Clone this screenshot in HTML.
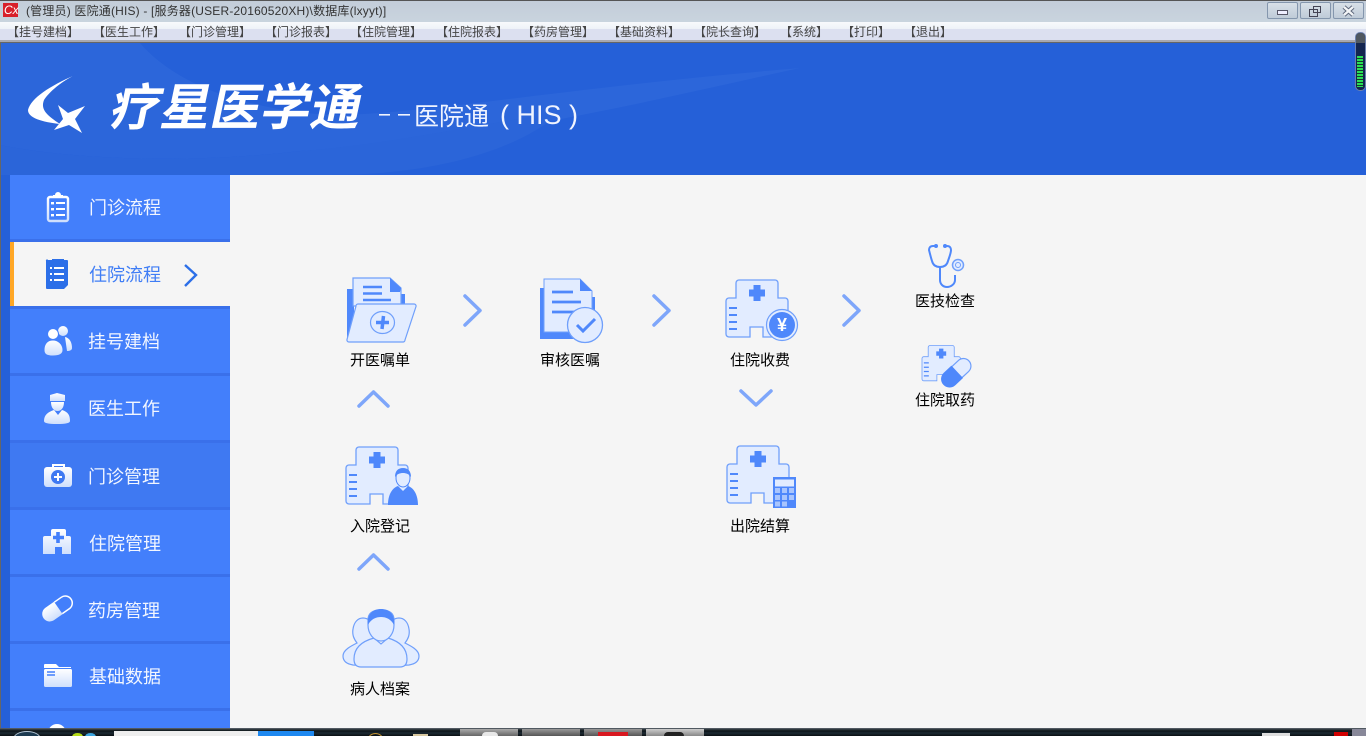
<!DOCTYPE html>
<html><head><meta charset="utf-8">
<style>
html,body{margin:0;padding:0;width:1366px;height:736px;overflow:hidden;background:#f5f5f5;font-family:"Liberation Sans","Noto Sans CJK SC",sans-serif}
#r{position:relative;width:1366px;height:736px;overflow:hidden;background:#f5f5f5}
.a{position:absolute}
svg{position:absolute;left:0;top:0;overflow:hidden}
.m{position:absolute;top:24px;font:12px/16px "Liberation Sans","WenQuanYi Zen Hei",sans-serif;color:#444;white-space:nowrap}
.s{position:absolute;left:10px;width:220px;height:64px;background:#437ffb}
.st{position:absolute;font:18px/24px "Liberation Sans","Noto Sans CJK SC",sans-serif;color:#f2f6ff;white-space:nowrap}
.l{position:absolute;font:15px/20px "Liberation Sans","WenQuanYi Zen Hei",sans-serif;color:#000;white-space:nowrap;width:80px;text-align:center}
.b{position:absolute;top:2px;width:29px;height:15px;border:1px solid #8496ad;border-radius:2px;background:linear-gradient(#d8e0e8,#bfcbd8)}
</style></head><body><div id="r">
<div class="a" style="left:0;top:0;width:1366px;height:22px;background:linear-gradient(#c3cdd9,#c9d4de);border-top:1px solid #555;box-sizing:border-box"></div>
<div class="a" style="left:3px;top:3px;width:15px;height:14px;background:#d8202a"></div>
<div class="a" style="left:4px;top:5px;font:italic 12px/11px 'Liberation Sans';color:#fff">Cx</div>
<div class="a" style="left:26px;top:3px;font:12px/16px 'Liberation Sans','WenQuanYi Zen Hei',sans-serif;color:#333;white-space:nowrap;letter-spacing:.18px">(管理员) 医院通(HIS) - [服务器(USER-20160520XH)\数据库(lxyyt)]</div>
<div class="b" style="left:1267px"></div><div class="a" style="left:1277px;top:10px;width:9px;height:3px;background:#eef;border:1px solid #556"></div>
<div class="b" style="left:1300px"></div><div class="a" style="left:1309px;top:9px;width:7px;height:6px;border:1px solid #445"></div><div class="a" style="left:1313px;top:6px;width:6px;height:5px;border:1px solid #445"></div>
<div class="b" style="left:1333px"></div>
<svg width="1366" height="40"><path d="M1344 7l9 8M1353 7l-9 8" stroke="#5a6478" stroke-width="4.200"/><path d="M1344 7l9 8M1353 7l-9 8" stroke="#f2f4f6" stroke-width="2.400"/></svg>

<div class="a" style="left:0;top:22px;width:1366px;height:7px;background:linear-gradient(#f8fafc,#eef2f8)"></div>
<div class="a" style="left:0;top:29px;width:1366px;height:11px;background:#dce0f0"></div>
<div class="a" style="left:0;top:40px;width:1366px;height:2px;background:#a8a8b0"></div>
<div class="a" style="left:0;top:42px;width:1366px;height:1px;background:#666"></div>
<div class="m" style="left:7px">【挂号建档】</div><div class="m" style="left:93px">【医生工作】</div><div class="m" style="left:179px">【门诊管理】</div><div class="m" style="left:265px">【门诊报表】</div><div class="m" style="left:350px">【住院管理】</div><div class="m" style="left:436px">【住院报表】</div><div class="m" style="left:522px">【药房管理】</div><div class="m" style="left:608px">【基础资料】</div><div class="m" style="left:694px">【院长查询】</div><div class="m" style="left:780px">【系统】</div><div class="m" style="left:842px">【打印】</div><div class="m" style="left:904px">【退出】</div>

<!-- header -->
<div class="a" style="left:0;top:43px;width:1366px;height:132px;background:#2560d8;overflow:hidden">
<svg width="1366" height="132"><path d="M0 0H140C170 35 230 65 330 72C420 72 560 45 800 25C640 60 480 100 300 108C200 120 80 118 0 102Z" fill="#2c66da"/><path d="M0 102C80 118 200 120 300 108C400 100 480 80 560 70C520 105 440 132 330 132H0Z" fill="#2b65d9"/></svg>
</div>
<div class="a" style="left:0;top:43px;width:1px;height:685px;background:#666"></div>
<svg width="1366" height="736">
<path d="M75 75C50 86 31 98 28 110C28 118 42 122 60 124C48 116 40 110 44 100C49 92 62 81 75 75Z" fill="#fff"/>
<path d="M58 105L68 113L85 106L75 119L82 133L69 125L54 130L63 119Z" fill="#fff"/>
<rect x="379" y="114" width="11" height="1.600" fill="#f0f4ff"/><rect x="398" y="114" width="12" height="1.600" fill="#f0f4ff"/>
</svg>
<div class="a" style="left:113px;top:74px;font:bold 50px/60px 'Noto Sans CJK SC',sans-serif;color:#fff;white-space:nowrap;transform:skewX(-12deg)">疗星医学通</div>
<div class="a" style="left:414px;top:98px;font:25px/34px 'Noto Sans CJK SC',sans-serif;color:#f0f4ff;white-space:nowrap">医院通</div>
<div class="a" style="left:500px;top:98px;font:27px/34px 'Liberation Sans',sans-serif;color:#f0f4ff;white-space:pre">( HIS )</div>
<!-- meter -->
<div class="a" style="left:1355px;top:32px;width:9px;height:57px;background:#13254f;border:1px solid #6c80ad;border-radius:5px"></div>
<div class="a" style="left:1356px;top:33px;width:9px;height:10px;background:#505860;border-radius:4px 4px 0 0"></div>
<div class="a" style="left:1357px;top:56px;width:6px;height:31px;background:repeating-linear-gradient(#2adf55 0 2px,#143a30 2px 3px)"></div>

<!-- sidebar -->
<div class="a" style="left:1px;top:175px;width:229px;height:553px;background:#2560d8"></div>
<div class="a" style="left:10px;top:175px;width:220px;height:553px;background:#3a70ea"></div>
<div class="s" style="top:175px"></div>
<div class="s" style="top:242px;background:#f5f5f5"></div><div class="a" style="left:10px;top:242px;width:4px;height:64px;background:#ffa726"></div>
<div class="s" style="top:309px"></div>
<div class="s" style="top:376px"></div>
<div class="s" style="top:443px;background:#3f79f2"></div>
<div class="s" style="top:510px"></div>
<div class="s" style="top:577px"></div>
<div class="s" style="top:644px"></div>
<div class="s" style="top:711px;height:17px"></div>
<div class="st" style="left:89px;top:196px">门诊流程</div>
<div class="st" style="left:89px;top:263px;color:#3f7df5">住院流程</div>
<div class="st" style="left:88px;top:330px">挂号建档</div>
<div class="st" style="left:88px;top:397px">医生工作</div>
<div class="st" style="left:88px;top:465px">门诊管理</div>
<div class="st" style="left:89px;top:532px">住院管理</div>
<div class="st" style="left:88px;top:599px">药房管理</div>
<div class="st" style="left:89px;top:665px">基础数据</div>

<svg width="1366" height="736">
<defs><linearGradient id="w" x1="0" y1="0" x2="0" y2="1"><stop offset="0" stop-color="#fff"/><stop offset="1" stop-color="#cfdffc"/></linearGradient>
<g id="h"><path d="M13 0H49a3 3 0 0 1 3 3V18H59a3 3 0 0 1 3 3V54a3 3 0 0 1-3 3H37V47H24V57H3a3 3 0 0 1-3-3V21a3 3 0 0 1 3-3H10V3a3 3 0 0 1 3-3z" fill="#e2ecff" stroke="#6f9ffb" stroke-width="1.300"/><path d="M27.500 5h7v4.500H39v7h-4.500V21h-7v-4.500H23v-7h4.500z" fill="#4f88fb"/><path d="M3 28h8M3 35h8M3 42h8M3 49h8" stroke="#4f88fb" stroke-width="2"/></g></defs>
<!-- 门诊流程 -->
<rect x="48" y="197" width="20" height="24" rx="2" fill="#437ffb" stroke="url(#w)" stroke-width="2.400"/>
<path d="M53 197h10v-2h-2a3 3 0 0 0-6 0h-2z" fill="#fff"/>
<g fill="#fff"><rect x="51" y="202" width="3" height="2.400"/><rect x="51" y="208" width="3" height="2.400"/><rect x="51" y="214" width="3" height="2.400"/><rect x="56" y="202" width="9" height="2"/><rect x="56" y="208" width="9" height="2"/><rect x="56" y="214" width="9" height="2"/></g>
<!-- 住院流程 -->
<path d="M48 260h4v-1h12v1h3a1 1 0 0 1 1 1v24l-4 4H47a1 1 0 0 1-1-1V261a1 1 0 0 1 2-1z" fill="#2c6fe8"/>
<g fill="#fff"><rect x="50" y="267" width="2" height="2"/><rect x="50" y="273" width="2" height="2"/><rect x="50" y="279" width="2" height="2"/><rect x="54" y="267" width="10" height="2"/><rect x="54" y="273" width="10" height="2"/><rect x="54" y="279" width="10" height="2"/></g>
<path d="M185 265l11 10-11 11" fill="none" stroke="#2c6fe8" stroke-width="2.400"/>
<!-- 挂号建档 -->
<circle cx="63" cy="331" r="5" fill="url(#w)"/><path d="M65 337c5 1 7 6 7 11 0 2-2 3-5 3z" fill="url(#w)"/>
<circle cx="53" cy="334" r="5.500" fill="#fff" stroke="#437ffb"/><path d="M44 350c0-7 4-10 9-10s10 4 10 10c0 4-3 6-10 6s-9-2-9-6z" fill="url(#w)" stroke="#437ffb"/>
<!-- 医生工作 -->
<path d="M50 395l7-2 8 2v6H50z" fill="url(#w)"/><path d="M51 402h13c0 6-3 9-6.500 9S51 408 51 402z" fill="url(#w)"/>
<path d="M44 421c0-6 4-9 10-11l4 5 4-5c6 2 8 5 8 11 0 2-4 3-13 3s-13-1-13-3z" fill="url(#w)"/>
<!-- 门诊管理 -->
<path d="M53 468v-3h11v3" fill="none" stroke="#fff" stroke-width="2"/><rect x="44" y="467" width="28" height="20" rx="3" fill="url(#w)"/>
<circle cx="58" cy="477" r="7" fill="#3f79f2"/><path d="M58 473v8M54 477h8" stroke="#fff" stroke-width="2"/>
<!-- 住院管理 -->
<path d="M51 531a2 2 0 0 1 2-2h11a2 2 0 0 1 2 2v5h3a2 2 0 0 1 2 2v16H62v-7h-7v7H43V538a2 2 0 0 1 2-2h6z" fill="url(#w)"/>
<path d="M58 532v11M53 537.500h11" stroke="#437ffb" stroke-width="3.600"/>
<!-- 药房管理 -->
<g transform="translate(57.500 608.500) rotate(-35)"><path d="M1 -7.500H-9.500a7.500 7.500 0 0 0 0 15H1z" fill="url(#w)"/><path d="M1 -7H9.500a7 7 0 0 1 0 14H1" fill="none" stroke="#fff" stroke-width="1.500"/></g>
<!-- 基础数据 -->
<path d="M44 665a1 1 0 0 1 1-1h11l3 3h12v1H44z" fill="#fff"/><rect x="44" y="669" width="28" height="18" rx="1.500" fill="url(#w)"/><path d="M47 672h8M47 675h8" stroke="#437ffb" stroke-width="1.500"/>
<circle cx="57" cy="733" r="9" fill="#fff"/>

<!-- arrows -->
<g fill="none" stroke="#7ea6fa" stroke-width="3.500" stroke-linecap="round" stroke-linejoin="round">
<path d="M465 296l15 14.500-15 14.500M654 296l15 14.500-15 14.500M844 296l15 14.500-15 14.500"/>
<path d="M359 406l14.500-14 14.500 14M359 569l14.500-14 14.500 14"/>
<path d="M741 391l15 14 15-14"/></g>

<!-- 开医嘱单 -->
<path d="M347 289h7v30l-7 21z" fill="#4f88fb"/><rect x="398" y="294" width="7" height="12" fill="#4f88fb"/>
<path d="M353 278h37l11 10v18h-48z" fill="#e2ecff" stroke="#6f9ffb" stroke-width="1.200"/><path d="M390 278l11 10-1 4h-10z" fill="#4f88fb"/>
<path d="M363 287h19M363 293.500h19M363 300h28" stroke="#4f88fb" stroke-width="2.500"/>
<path d="M358 304H414a2 2 0 0 1 2 2.500L405 340a2 2 0 0 1-2 2H349a2 2 0 0 1-2-2.500L356 306a2 2 0 0 1 2-2z" fill="#e2ecff" stroke="#6f9ffb" stroke-width="1.200"/>
<ellipse cx="382.500" cy="322.500" rx="12" ry="11" fill="none" stroke="#6f9ffb" stroke-width="1.200"/>
<path d="M383.500 316l-1.500 13M376 322.500h13" stroke="#4f88fb" stroke-width="3.500"/>

<!-- 审核医嘱 -->
<rect x="540" y="288" width="10" height="47" fill="#4f88fb"/><rect x="540" y="331" width="40" height="8" fill="#4f88fb"/><rect x="588" y="297" width="7" height="20" fill="#4f88fb"/>
<path d="M544 279h36l12 12v41h-48z" fill="#e2ecff" stroke="#6f9ffb" stroke-width="1"/><path d="M580 279l12 12h-12z" fill="#4f88fb"/>
<path d="M552 292h21M552 302h29M552 312h29" stroke="#4f88fb" stroke-width="2.800"/>
<circle cx="585" cy="325" r="17.500" fill="#e2ecff" stroke="#6f9ffb" stroke-width="1.300"/>
<path d="M577 325l6 6 12-12" fill="none" stroke="#4f88fb" stroke-width="3"/>

<!-- 住院收费 -->
<use href="#h" x="726" y="280"/>
<circle cx="782" cy="325" r="15.500" fill="#e2ecff" stroke="#6f9ffb" stroke-width="1.200"/><circle cx="782" cy="325" r="13" fill="#4f88fb"/>
<text x="782" y="331" text-anchor="middle" font-family="Liberation Sans" font-weight="bold" font-size="18" fill="#fff">¥</text>

<!-- 出院结算 -->
<use href="#h" x="727" y="446"/>
<rect x="773" y="477" width="23" height="31" fill="#4f88fb"/><rect x="775" y="479.500" width="19" height="7" fill="#e2ecff"/>
<g fill="#a9c5fd"><rect x="775" y="488" width="5" height="5"/><rect x="782" y="488" width="5" height="5"/><rect x="789" y="488" width="5" height="5"/><rect x="775" y="495" width="5" height="5"/><rect x="782" y="495" width="5" height="5"/><rect x="789" y="495" width="5" height="5"/><rect x="775" y="501.500" width="5" height="5"/><rect x="782" y="501.500" width="5" height="5"/></g>

<!-- 入院登记 -->
<use href="#h" x="346" y="447"/>
<path d="M388 505c0-10 4-17 10-19l5 5 5-5c6 2 10 9 10 19z" fill="#4f88fb"/>
<ellipse cx="403" cy="478" rx="7" ry="9" fill="#e2ecff" stroke="#4f88fb"/><path d="M395 477c0-6 3-9 8-9s8 3 8 9c-2-3-5-4-8-4s-6 1-8 4z" fill="#4f88fb"/>

<!-- 病人档案 -->
<g fill="#e2ecff" stroke="#6f9ffb" stroke-width="1.200">
<path d="M343 656c0-6 8-10 14-13-3-4-5-8-4-14 1-7 5-11 10-11s10 4 11 11l2 28-5 9-18-1c-6-1-10-4-10-9z"/>
<path d="M419 656c0-6-8-10-14-13 3-4 5-8 4-14-1-7-5-11-10-11s-10 4-11 11l-2 28 5 9 18-1c6-1 10-4 10-9z"/>
<path d="M354 659c0-12 9-18 20-21l7 6 7-6c10 3 19 9 19 21 0 6-3 8-7 8h-39c-4 0-7-2-7-8z"/>
<path d="M368 620c0-7 5-10 13-10s13 3 13 10v5c0 9-6 16-13 16s-13-7-13-16z"/>
</g>
<path d="M368 625c-1-10 4-16 13-16s14 6 13 16c-3-6-8-8-13-8s-10 2-13 8z" fill="#4f88fb"/>

<!-- 医技检查 -->
<g fill="none" stroke="#4f88fb" stroke-width="2">
<path d="M935 246h-2c-3 0-4 2-4 4 1 4 2 8 3 11 1 4 4 6 8 6s7-2 8-6c1-3 3-8 3-11 0-2-1-4-4-4h-2"/>
<path d="M940 267v13c0 4 3 7 7 7s8-3 8-7v-5"/></g>
<circle cx="936" cy="246" r="2" fill="#4f88fb"/><circle cx="945" cy="246" r="2" fill="#4f88fb"/>
<circle cx="958" cy="265" r="5.500" fill="#e2ecff" stroke="#6f9ffb" stroke-width="1.500"/><circle cx="958" cy="265" r="2.500" fill="none" stroke="#6f9ffb"/>

<!-- 住院取药 -->
<g transform="translate(922 345.500) scale(.62)"><use href="#h"/></g>
<g transform="translate(956.500 372.500) rotate(-43)"><path d="M0 -7.500H9.500a7.500 7.500 0 0 1 0 15H0z" fill="#e2ecff" stroke="#6f9ffb" stroke-width="1.200"/><path d="M1 -8.500H-9.500a8.500 8.500 0 0 0 0 17H1z" fill="#4f88fb"/></g>
</svg>

<!-- labels -->
<div class="l" style="left:340px;top:351px">开医嘱单</div>
<div class="l" style="left:530px;top:351px">审核医嘱</div>
<div class="l" style="left:720px;top:351px">住院收费</div>
<div class="l" style="left:905px;top:292px">医技检查</div>
<div class="l" style="left:905px;top:391px">住院取药</div>
<div class="l" style="left:340px;top:517px">入院登记</div>
<div class="l" style="left:720px;top:517px">出院结算</div>
<div class="l" style="left:340px;top:680px">病人档案</div>

<!-- taskbar -->
<div class="a" style="left:0;top:728px;width:1366px;height:8px;background:linear-gradient(#6a7078 0,#39424a 1px,#0c1418 3px,#1c2a32 5px,#0a0f12 8px)"></div>
<div class="a" style="left:13px;top:731px;width:26px;height:14px;border-radius:50%;background:#1c3a50;border:1px solid #b4c6d6"></div>
<div class="a" style="left:72px;top:733px;width:11px;height:8px;border-radius:50%;background:#b6dc18"></div>
<div class="a" style="left:85px;top:733px;width:11px;height:8px;border-radius:50%;background:#3ca6e0"></div>
<div class="a" style="left:114px;top:731px;width:144px;height:5px;background:#eeeeee"></div>
<div class="a" style="left:258px;top:731px;width:56px;height:5px;background:#1e88f0"></div>
<div class="a" style="left:368px;top:733px;width:13px;height:10px;border:1px solid #c09030;border-radius:50%"></div>
<div class="a" style="left:413px;top:734px;width:15px;height:2px;background:#d8c8a0"></div>
<div class="a" style="left:460px;top:729px;width:58px;height:7px;background:linear-gradient(#aaa,#666)"></div>
<div class="a" style="left:482px;top:732px;width:16px;height:4px;background:#e8e8e8;border-radius:8px 8px 0 0"></div>
<div class="a" style="left:522px;top:729px;width:58px;height:7px;background:linear-gradient(#999,#555)"></div>
<div class="a" style="left:584px;top:729px;width:58px;height:7px;background:linear-gradient(#999,#555)"></div>
<div class="a" style="left:598px;top:732px;width:30px;height:4px;background:#d81820"></div>
<div class="a" style="left:646px;top:729px;width:58px;height:7px;background:linear-gradient(#ccc,#888)"></div>
<div class="a" style="left:664px;top:732px;width:20px;height:4px;background:#222;border-radius:10px 10px 0 0"></div>
<div class="a" style="left:1262px;top:733px;width:28px;height:3px;background:#ddd"></div>
<div class="a" style="left:1334px;top:732px;width:14px;height:4px;background:#d00000"></div>
<div class="a" style="left:1352px;top:729px;width:14px;height:7px;background:#889"></div>
</div></body></html>
